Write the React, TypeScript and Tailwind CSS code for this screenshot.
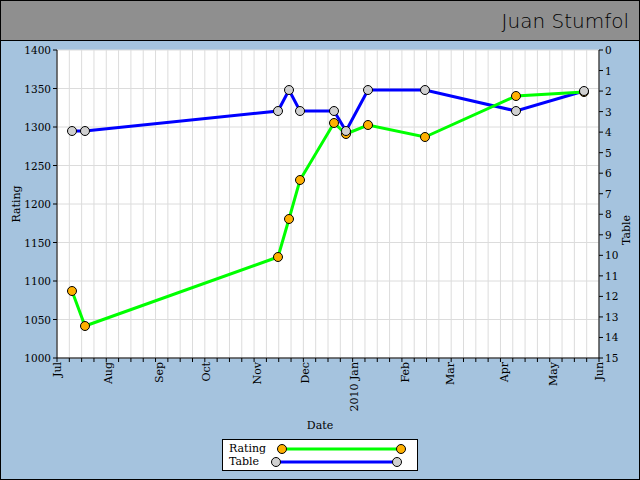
const rating: [number, number][] = [
  [72, 291], [85, 326], [278, 257], [289, 219], [300, 180], [334, 123],
  [346, 134], [368, 125], [425, 137], [516, 96], [584, 92],
];
const table: [number, number][] = [
  [72, 131], [85, 131], [278, 111], [289, 90], [300, 111], [334, 111],
  [346, 131], [368, 90], [425, 90], [516, 111], [584, 91],
];
const months: [string, number][] = [
  ['Jul', 57], ['Aug', 108], ['Sep', 159], ['Oct', 206], ['Nov', 257], ['Dec', 305],
  ['2010 Jan', 354], ['Feb', 405], ['Mar', 450], ['Apr', 504], ['May', 553], ['Jun', 599],
];
const L = 57, R = 599, T = 50, B = 358;
const weeks = Array.from({ length: 45 }, (_, i) => L + i * ((R - L) / 44));
const ratings = [1400, 1350, 1300, 1250, 1200, 1150, 1100, 1050, 1000];
const ry = (v: number) => T + ((1400 - v) / 400) * (B - T);
const ty = (v: number) => T + (v / 15) * (B - T);
const serif = { fontFamily: '"DejaVu Serif", serif' };

function Chart() {
  return (
    <svg width={640} height={392} viewBox="0 41 640 392" style={serif}>
      <rect x={L} y={T} width={R - L} height={B - T} fill="#fff" />
      {weeks.map((x, i) => (
        <line key={i} x1={x} y1={T} x2={x} y2={B} stroke="#dcdcdc" />
      ))}
      {ratings.map((v) => (
        <line key={v} x1={L} y1={ry(v)} x2={R} y2={ry(v)} stroke="#dcdcdc" />
      ))}
      <line x1={L} y1={T} x2={L} y2={B} stroke="#000" />
      <line x1={R} y1={T} x2={R} y2={B} stroke="#000" />
      <line x1={L} y1={B} x2={R} y2={B} stroke="#000" />
      {ratings.map((v) => (
        <g key={v}>
          <line x1={L - 4} y1={ry(v)} x2={L} y2={ry(v)} stroke="#000" />
          <text x={L - 6} y={ry(v) + 4} fontSize={10.5} textAnchor="end">{v}</text>
        </g>
      ))}
      {Array.from({ length: 16 }, (_, v) => (
        <g key={v}>
          <line x1={R} y1={ty(v)} x2={R + 4} y2={ty(v)} stroke="#000" />
          <text x={R + 6} y={ty(v) + 4} fontSize={10.5}>{v}</text>
        </g>
      ))}
      {weeks.map((x, i) => (
        <line key={i} x1={x} y1={B} x2={x} y2={B + 4} stroke="#000" />
      ))}
      {months.map(([m, x]) => (
        <text key={m} fontSize={11} textAnchor="end" transform={`translate(${x + 4},362) rotate(-90)`}>{m}</text>
      ))}
      <text x={320} y={429} fontSize={11} textAnchor="middle">Date</text>
      <text fontSize={11} textAnchor="middle" transform="translate(20,204) rotate(-90)">Rating</text>
      <text fontSize={11} textAnchor="middle" transform="translate(630,230) rotate(-90)">Table</text>
      <polyline points={table.map((p) => p.join(',')).join(' ')} fill="none" stroke="#0000ff" strokeWidth={3} />
      <polyline points={rating.map((p) => p.join(',')).join(' ')} fill="none" stroke="#00ff00" strokeWidth={3} />
      {rating.map(([x, y], i) => (
        <circle key={i} cx={x} cy={y} r={4.5} fill="#ffb000" stroke="#000" />
      ))}
      {table.map(([x, y], i) => (
        <circle key={i} cx={x} cy={y} r={4.5} fill="#d0d0d0" stroke="#000" />
      ))}
    </svg>
  );
}

function LegendLine({ color, fill, x1 }: { color: string; fill: string; x1: number }) {
  return (
    <svg width={134} height={12}>
      <line x1={x1} y1={6} x2={128} y2={6} stroke={color} strokeWidth={3} />
      <circle cx={x1} cy={6} r={4.5} fill={fill} stroke="#000" />
      <circle cx={128} cy={6} r={4.5} fill={fill} stroke="#000" />
    </svg>
  );
}

export default function App() {
  return (
    <div className="w-[640px] h-[480px] border border-black flex flex-col overflow-hidden">
      <div className="h-[40px] bg-[#8f8f8f] border-b border-black flex items-center justify-end pr-[10px] flex-shrink-0">
        <span className="text-[20px] text-black font-extralight" style={{ fontFamily: '"DejaVu Sans", cursive' }}>
          Juan Stumfol
        </span>
      </div>
      <div className="flex-1 bg-[#a5c3de] flex flex-col items-center">
        <Chart />
        <div className="mt-[6px] w-[196px] h-[32px] bg-white border border-black flex flex-col justify-center pl-[6px] text-[11px] leading-[13px]" style={serif}>
          <div className="flex items-center">
            <span className="w-[44px]">Rating</span>
            <LegendLine color="#00ff00" fill="#ffb000" x1={9} />
          </div>
          <div className="flex items-center">
            <span className="w-[40px]">Table</span>
            <LegendLine color="#0000ff" fill="#d0d0d0" x1={7} />
          </div>
        </div>
      </div>
    </div>
  );
}
